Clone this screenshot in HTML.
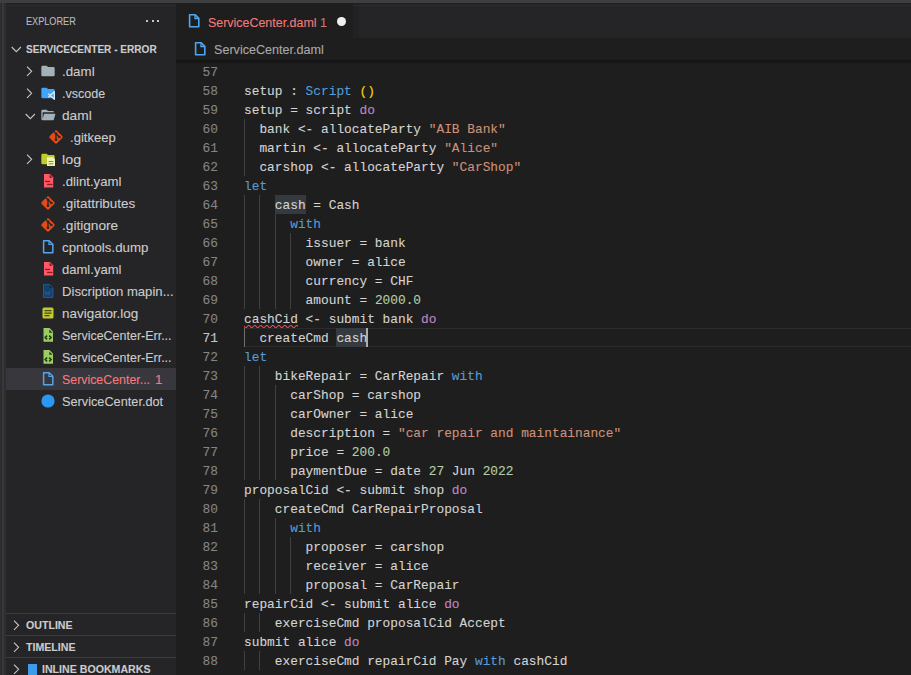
<!DOCTYPE html>
<html><head><meta charset="utf-8">
<style>
*{margin:0;padding:0;box-sizing:border-box}
html,body{width:911px;height:675px;overflow:hidden;background:#1e1e1e}
body{position:relative;font-family:"Liberation Sans",sans-serif;-webkit-text-stroke:0.1px}
.abs{position:absolute}
#topstrip{left:0;top:0;width:911px;height:3px;background:#3e3e40}
#topline{left:6px;top:3px;width:905px;height:1px;background:#202022}
#topline2{left:6px;top:5px;width:905px;height:1px;background:#2b2b2d}
#act{left:0;top:3px;width:6px;height:672px;background:linear-gradient(90deg,#2f2f31 0,#2f2f31 1.5px,#2a2a2c 1.5px,#2a2a2c 2.5px,#38383a 2.5px,#38383a 4px,#2d2d2f 4px,#2d2d2f 6px)}
#side{left:6px;top:3px;width:170px;height:672px;background:#252527}
#tabbar{left:176px;top:3px;width:735px;height:35px;background:#252527}
#tab{left:176px;top:3px;width:177px;height:35px;background:#1e1e1e}
#crumbs{left:176px;top:38px;width:735px;height:22px;background:#1e1e1e}
#editor{left:176px;top:60px;width:735px;height:615px;background:#1e1e1e;overflow:hidden}
#shadow{left:176px;top:59px;width:735px;height:6px;background:linear-gradient(#1e1e1e 0,#161616 1.5px,#151515 2.5px,#1b1b1b 4px,#1e1e1e 6px)}
.st{font-size:13.2px;transform:scaleX(0.963);transform-origin:0 0;line-height:22px;height:22px;color:#cccccc;white-space:nowrap;padding-top:0.5px}
.sb{font-size:11px;font-weight:bold;line-height:22px;height:22px;color:#cccccc;white-space:nowrap;transform-origin:0 0}
.row{position:absolute;left:6px;width:170px;height:22px}
.row .t{position:absolute;top:4px;font-size:12.6px;color:#cccccc;white-space:nowrap;line-height:14px}
.ln{position:absolute;left:177px;padding-top:1px;width:41px;text-align:right;font-family:"Liberation Mono",monospace;font-size:12.83px;line-height:19px;color:#858585;height:19px}
.cl{position:absolute;left:244px;padding-top:1px;font-family:"Liberation Mono",monospace;font-size:12.83px;line-height:19px;color:#d4d4d4;white-space:pre;height:19px}
.g{position:absolute;width:1px;background:#404040}
.k{color:#569cd6}.p{color:#c586c0}.s{color:#ce9178}.n{color:#b5cea8}.y{color:#ffd700}
.ph{position:absolute;left:6px;width:170px;height:22px;border-top:1px solid #3f3f46}
.ph .t{position:absolute;top:5px;font-size:11px;font-weight:bold;color:#cccccc;white-space:nowrap}
</style></head><body>
<div class="abs" id="side"></div>
<div class="abs" id="tabbar"></div>
<div class="abs" style="left:353px;top:3px;width:6px;height:35px;background:#222224"></div>
<div class="abs" id="crumbs"></div>
<div class="abs" id="editor"></div>
<div class="abs" id="shadow"></div>
<div class="abs" id="topstrip"></div>
<div class="abs" id="act"></div>
<div class="abs" id="topline"></div>
<div class="abs" id="topline2"></div>
<div class="abs" id="tab"></div>

<!-- sidebar header -->
<div class="abs" style="left:26px;top:15px;font-size:11px;color:#bbbbbb;white-space:nowrap;transform:scaleX(0.83);transform-origin:0 0">EXPLORER</div>
<div class="abs" style="left:146px;top:20px;width:2px;height:2px;background:#c5c5c5"></div>
<div class="abs" style="left:152px;top:20px;width:2px;height:2px;background:#c5c5c5"></div>
<div class="abs" style="left:157px;top:20px;width:2px;height:2px;background:#c5c5c5"></div>

<!-- tab -->
<svg class="abs" style="left:186px;top:13px" width="16" height="16" viewBox="0 0 16 16"><path fill="#163a66" d="M9.2 1.6v3.6h3.6z"/><path fill="none" stroke="#4ea6f2" stroke-width="1.6" stroke-linejoin="round" d="M3.6 1.7h5.6l3.6 3.6v8.5H3.6z"/><path fill="none" stroke="#4ea6f2" stroke-width="1.3" d="M9 1.7v3.8h3.8"/></svg>
<div class="abs" style="left:208px;top:4.5px;line-height:35px;font-size:13.2px;color:#f47a7a;white-space:nowrap;transform:scaleX(0.943);transform-origin:0 0">ServiceCenter.daml<span style="color:#c9796c"> 1</span></div>
<div class="abs" style="left:337px;top:16.5px;width:9px;height:9px;border-radius:50%;background:#f0f0f0"></div>
<svg class="abs" style="left:192px;top:41px" width="16" height="16" viewBox="0 0 16 16"><path fill="#163a66" d="M9.2 1.6v3.6h3.6z"/><path fill="none" stroke="#4ea6f2" stroke-width="1.6" stroke-linejoin="round" d="M3.6 1.7h5.6l3.6 3.6v8.5H3.6z"/><path fill="none" stroke="#4ea6f2" stroke-width="1.3" d="M9 1.7v3.8h3.8"/></svg>
<div class="abs" style="left:214px;top:39px;line-height:22px;font-size:12.6px;color:#a9a9a9;white-space:nowrap">ServiceCenter.daml</div>
<!-- code lines -->
<div class="abs" style="left:6px;top:368px;width:170px;height:22px;background:#37373d"></div>
<svg class="abs" style="left:11px;top:46px" width="11" height="7" viewBox="0 0 11 7"><path d="M0.7 1 L5.3 5.6 L9.9 1" stroke="#c5c5c5" stroke-width="1.1" fill="none"/></svg>
<div class="abs sb" style="left:26px;top:38px;transform:scaleX(0.915)">SERVICECENTER - ERROR</div>
<svg class="abs" style="left:26px;top:65.5px" width="7" height="11" viewBox="0 0 7 11"><path d="M1 0.7 L5.6 5.3 L1 9.9" stroke="#c5c5c5" stroke-width="1.1" fill="none"/></svg>
<svg class="abs" style="left:40px;top:63px" width="16" height="16" viewBox="0 0 24 24"><path fill="#a3b1b9" d="M10 4H4c-1.11 0-2 .89-2 2v12a2 2 0 0 0 2 2h16a2 2 0 0 0 2-2V8c0-1.11-.9-2-2-2h-8l-2-2z"/></svg>
<div class="abs st" style="left:62px;top:60px;color:#cccccc;transform:scaleX(1.011)">.daml</div>
<svg class="abs" style="left:26px;top:87.5px" width="7" height="11" viewBox="0 0 7 11"><path d="M1 0.7 L5.6 5.3 L1 9.9" stroke="#c5c5c5" stroke-width="1.1" fill="none"/></svg>
<svg class="abs" style="left:40px;top:85px" width="16" height="16" viewBox="0 0 24 24"><path fill="#42a5f5" d="M10 4H4c-1.11 0-2 .89-2 2v12a2 2 0 0 0 2 2h16a2 2 0 0 0 2-2V8c0-1.11-.9-2-2-2h-8l-2-2z"/><path fill="none" stroke="#d6ecff" stroke-width="1.9" stroke-linejoin="round" d="M12.5 13 L21.5 21.5 V10 L12.5 18.5"/></svg>
<div class="abs st" style="left:62px;top:82px;color:#cccccc;transform:scaleX(0.95)">.vscode</div>
<svg class="abs" style="left:24.5px;top:112.5px" width="11" height="7" viewBox="0 0 11 7"><path d="M0.7 1 L5.3 5.6 L9.9 1" stroke="#c5c5c5" stroke-width="1.1" fill="none"/></svg>
<svg class="abs" style="left:40px;top:107px" width="16" height="16" viewBox="0 0 24 24"><path fill="#a3b1b9" d="M19 20H4a2 2 0 0 1-2-2V6c0-1.11.89-2 2-2h6l2 2h7a2 2 0 0 1 2 2H4v10l2.14-8h17.07l-2.28 8.5c-.23.87-1.01 1.5-1.93 1.5z"/></svg>
<div class="abs st" style="left:62px;top:104px;color:#cccccc;transform:scaleX(1.039)">daml</div>
<svg class="abs" style="left:48px;top:129px" width="16" height="16" viewBox="0 0 24 24"><path fill="#e64a19" d="M2.6 10.59L8.38 4.8l1.69 1.7c-.24.85.15 1.78.93 2.23v5.54c-.6.34-1 .99-1 1.73a2 2 0 0 0 2 2 2 2 0 0 0 2-2c0-.74-.4-1.39-1-1.73V9.41l2.07 2.09c-.07.15-.07.32-.07.5a2 2 0 0 0 2 2 2 2 0 0 0 2-2 2 2 0 0 0-2-2c-.18 0-.35 0-.5.07L13.93 7.5a1.98 1.98 0 0 0-1.15-2.34c-.43-.16-.88-.2-1.28-.09L9.8 3.38l.79-.78c.78-.79 2.04-.79 2.82 0l7.99 7.99c.79.78.79 2.04 0 2.82l-7.99 7.99c-.78.79-2.04.79-2.82 0L2.6 13.41c-.79-.78-.79-2.04 0-2.82z"/></svg>
<div class="abs st" style="left:70px;top:126px;color:#cccccc;transform:scaleX(0.991)">.gitkeep</div>
<svg class="abs" style="left:26px;top:153.5px" width="7" height="11" viewBox="0 0 7 11"><path d="M1 0.7 L5.6 5.3 L1 9.9" stroke="#c5c5c5" stroke-width="1.1" fill="none"/></svg>
<svg class="abs" style="left:40px;top:151px" width="16" height="16" viewBox="0 0 24 24"><path fill="#c0ca33" d="M10 4H4c-1.11 0-2 .89-2 2v12a2 2 0 0 0 2 2h16a2 2 0 0 0 2-2V8c0-1.11-.9-2-2-2h-8l-2-2z"/><path fill="#eef4b0" d="M10.5 9.5h9l3 3v10h-12z"/><rect x="13" y="15" width="7" height="1.5" fill="#8a8a30"/><rect x="13" y="18.5" width="7" height="1.5" fill="#8a8a30"/></svg>
<div class="abs st" style="left:62px;top:148px;color:#cccccc;transform:scaleX(1.085)">log</div>
<svg class="abs" style="left:40px;top:173px" width="16" height="16" viewBox="0 0 16 16"><path fill="#ff5868" d="M4 1h6l3.2 3.2V14.6H4z"/><path fill="#7a1a1a" d="M9.5 1.6v3.2h3.2z"/><rect x="5" y="7.8" width="5" height="1.3" fill="#8b1c1c"/><rect x="7" y="10.8" width="5.5" height="1.3" fill="#8b1c1c"/></svg>
<div class="abs st" style="left:62px;top:170px;color:#cccccc;transform:scaleX(1.002)">.dlint.yaml</div>
<svg class="abs" style="left:40px;top:195px" width="16" height="16" viewBox="0 0 24 24"><path fill="#e64a19" d="M2.6 10.59L8.38 4.8l1.69 1.7c-.24.85.15 1.78.93 2.23v5.54c-.6.34-1 .99-1 1.73a2 2 0 0 0 2 2 2 2 0 0 0 2-2c0-.74-.4-1.39-1-1.73V9.41l2.07 2.09c-.07.15-.07.32-.07.5a2 2 0 0 0 2 2 2 2 0 0 0 2-2 2 2 0 0 0-2-2c-.18 0-.35 0-.5.07L13.93 7.5a1.98 1.98 0 0 0-1.15-2.34c-.43-.16-.88-.2-1.28-.09L9.8 3.38l.79-.78c.78-.79 2.04-.79 2.82 0l7.99 7.99c.79.78.79 2.04 0 2.82l-7.99 7.99c-.78.79-2.04.79-2.82 0L2.6 13.41c-.79-.78-.79-2.04 0-2.82z"/></svg>
<div class="abs st" style="left:62px;top:192px;color:#cccccc;transform:scaleX(1.02)">.gitattributes</div>
<svg class="abs" style="left:40px;top:217px" width="16" height="16" viewBox="0 0 24 24"><path fill="#e64a19" d="M2.6 10.59L8.38 4.8l1.69 1.7c-.24.85.15 1.78.93 2.23v5.54c-.6.34-1 .99-1 1.73a2 2 0 0 0 2 2 2 2 0 0 0 2-2c0-.74-.4-1.39-1-1.73V9.41l2.07 2.09c-.07.15-.07.32-.07.5a2 2 0 0 0 2 2 2 2 0 0 0 2-2 2 2 0 0 0-2-2c-.18 0-.35 0-.5.07L13.93 7.5a1.98 1.98 0 0 0-1.15-2.34c-.43-.16-.88-.2-1.28-.09L9.8 3.38l.79-.78c.78-.79 2.04-.79 2.82 0l7.99 7.99c.79.78.79 2.04 0 2.82l-7.99 7.99c-.78.79-2.04.79-2.82 0L2.6 13.41c-.79-.78-.79-2.04 0-2.82z"/></svg>
<div class="abs st" style="left:62px;top:214px;color:#cccccc;transform:scaleX(1.036)">.gitignore</div>
<svg class="abs" style="left:40px;top:239px" width="16" height="16" viewBox="0 0 16 16"><path fill="#163a66" d="M9.2 1.6v3.6h3.6z"/><path fill="none" stroke="#55a5ee" stroke-width="1.5" stroke-linejoin="round" d="M3.6 1.7h5.6l3.6 3.6v8.5H3.6z"/><path fill="none" stroke="#55a5ee" stroke-width="1.2" d="M9 1.7v3.8h3.8"/></svg>
<div class="abs st" style="left:62px;top:236px;color:#cccccc;transform:scaleX(1.007)">cpntools.dump</div>
<svg class="abs" style="left:40px;top:261px" width="16" height="16" viewBox="0 0 16 16"><path fill="#ff5868" d="M4 1h6l3.2 3.2V14.6H4z"/><path fill="#7a1a1a" d="M9.5 1.6v3.2h3.2z"/><rect x="5" y="7.8" width="5" height="1.3" fill="#8b1c1c"/><rect x="7" y="10.8" width="5.5" height="1.3" fill="#8b1c1c"/></svg>
<div class="abs st" style="left:62px;top:258px;color:#cccccc;transform:scaleX(0.989)">daml.yaml</div>
<svg class="abs" style="left:40px;top:283px" width="16" height="16" viewBox="0 0 16 16"><path fill="#17406f" stroke="#245c9c" stroke-width="0.9" d="M3.5 1.3h6l3.5 3.5V14.4H3.5z"/><path fill="#0c2a50" d="M9.5 2v3h3z"/><path fill="none" stroke="#2a5f9e" stroke-width="0.9" d="M5.2 8l1 3.8 1.3-2.8 1.3 2.8 1-3.8"/></svg>
<div class="abs st" style="left:62px;top:280px;color:#cccccc;transform:scaleX(0.995)">Discription mapin...</div>
<svg class="abs" style="left:40px;top:305px" width="16" height="16" viewBox="0 0 16 16"><rect x="2.5" y="2.5" width="11" height="11" rx="1.5" fill="#c0ca33"/><rect x="4.5" y="5" width="7" height="1.3" fill="#4a4a10"/><rect x="4.5" y="7.5" width="7" height="1.3" fill="#4a4a10"/><rect x="4.5" y="10" width="5" height="1.3" fill="#4a4a10"/></svg>
<div class="abs st" style="left:62px;top:302px;color:#cccccc;transform:scaleX(1.02)">navigator.log</div>
<svg class="abs" style="left:40px;top:327px" width="16" height="16" viewBox="0 0 16 16"><path fill="#9ccc65" d="M3.5 1h6l3.5 3.5V14.7H3.5z"/><path fill="#1f3a08" d="M9.3 2.6 L12.4 5.7 H9.3 Z"/><path fill="none" stroke="#1f3a08" stroke-width="1.5" d="M7.1 8.6L5.2 10.5l1.9 1.9M9.2 8.6l1.9 1.9-1.9 1.9"/></svg>
<div class="abs st" style="left:62px;top:324px;color:#cccccc;transform:scaleX(0.946)">ServiceCenter-Err...</div>
<svg class="abs" style="left:40px;top:349px" width="16" height="16" viewBox="0 0 16 16"><path fill="#9ccc65" d="M3.5 1h6l3.5 3.5V14.7H3.5z"/><path fill="#1f3a08" d="M9.3 2.6 L12.4 5.7 H9.3 Z"/><path fill="none" stroke="#1f3a08" stroke-width="1.5" d="M7.1 8.6L5.2 10.5l1.9 1.9M9.2 8.6l1.9 1.9-1.9 1.9"/></svg>
<div class="abs st" style="left:62px;top:346px;color:#cccccc;transform:scaleX(0.946)">ServiceCenter-Err...</div>
<svg class="abs" style="left:40px;top:371px" width="16" height="16" viewBox="0 0 16 16"><path fill="#163a66" d="M9.2 1.6v3.6h3.6z"/><path fill="none" stroke="#55a5ee" stroke-width="1.5" stroke-linejoin="round" d="M3.6 1.7h5.6l3.6 3.6v8.5H3.6z"/><path fill="none" stroke="#55a5ee" stroke-width="1.2" d="M9 1.7v3.8h3.8"/></svg>
<div class="abs st" style="left:62px;top:368px;color:#f47a7a;transform:scaleX(0.938)">ServiceCenter...</div>
<div class="abs st" style="left:155px;top:368px;color:#f47a7a;transform:none">1</div>
<svg class="abs" style="left:40px;top:393px" width="16" height="16" viewBox="0 0 16 16"><circle cx="8" cy="8" r="6.6" fill="#2a98f2"/></svg>
<div class="abs st" style="left:62px;top:390px;color:#cccccc;transform:scaleX(0.965)">ServiceCenter.dot</div>
<div class="abs" style="left:6px;top:613px;width:170px;height:1px;background:#3c3c3f"></div>
<svg class="abs" style="left:13px;top:620px" width="7" height="11" viewBox="0 0 7 11"><path d="M1 0.7 L5.6 5.3 L1 9.9" stroke="#c5c5c5" stroke-width="1.1" fill="none"/></svg>
<div class="abs sb" style="left:26px;top:614px;transform:scaleX(0.965)">OUTLINE</div>
<div class="abs" style="left:6px;top:635px;width:170px;height:1px;background:#3c3c3f"></div>
<svg class="abs" style="left:13px;top:642px" width="7" height="11" viewBox="0 0 7 11"><path d="M1 0.7 L5.6 5.3 L1 9.9" stroke="#c5c5c5" stroke-width="1.1" fill="none"/></svg>
<div class="abs sb" style="left:26px;top:636px;transform:scaleX(0.965)">TIMELINE</div>
<div class="abs" style="left:6px;top:657px;width:170px;height:1px;background:#3c3c3f"></div>
<svg class="abs" style="left:13px;top:664px" width="7" height="11" viewBox="0 0 7 11"><path d="M1 0.7 L5.6 5.3 L1 9.9" stroke="#c5c5c5" stroke-width="1.1" fill="none"/></svg>
<svg class="abs" style="left:27px;top:663px" width="11" height="14" viewBox="0 0 11 14"><path fill="#3d9be9" d="M1 1h9v11H1z"/><path fill="#e3f2fd" d="M1.5 12h8.5v2H1.5z"/></svg>
<div class="abs sb" style="left:42px;top:658px;transform:scaleX(0.965)">INLINE BOOKMARKS</div>
<div class="abs" style="left:244px;top:328px;width:667px;height:19px;border-top:1px solid #2b2b2b;border-bottom:1px solid #2b2b2b"></div>
<div class="ln" style="top:62px;">57</div>
<div class="ln" style="top:81px;">58</div>
<div class="ln" style="top:100px;">59</div>
<div class="ln" style="top:119px;">60</div>
<div class="ln" style="top:138px;">61</div>
<div class="ln" style="top:157px;">62</div>
<div class="ln" style="top:176px;">63</div>
<div class="ln" style="top:195px;">64</div>
<div class="abs" style="left:274.80px;top:195px;width:30.80px;height:19px;background:#343a40"></div>
<div class="ln" style="top:214px;">65</div>
<div class="ln" style="top:233px;">66</div>
<div class="ln" style="top:252px;">67</div>
<div class="ln" style="top:271px;">68</div>
<div class="ln" style="top:290px;">69</div>
<div class="ln" style="top:309px;">70</div>
<div class="ln" style="top:328px;color:#c6c6c6">71</div>
<div class="abs" style="left:336.40px;top:328px;width:30.80px;height:19px;background:#343a40"></div>
<div class="ln" style="top:347px;">72</div>
<div class="ln" style="top:366px;">73</div>
<div class="ln" style="top:385px;">74</div>
<div class="ln" style="top:404px;">75</div>
<div class="ln" style="top:423px;">76</div>
<div class="ln" style="top:442px;">77</div>
<div class="ln" style="top:461px;">78</div>
<div class="ln" style="top:480px;">79</div>
<div class="ln" style="top:499px;">80</div>
<div class="ln" style="top:518px;">81</div>
<div class="ln" style="top:537px;">82</div>
<div class="ln" style="top:556px;">83</div>
<div class="ln" style="top:575px;">84</div>
<div class="ln" style="top:594px;">85</div>
<div class="ln" style="top:613px;">86</div>
<div class="ln" style="top:632px;">87</div>
<div class="ln" style="top:651px;">88</div>
<div class="g" style="left:244.0px;top:119px;height:19px;background:#404040"></div>
<div class="g" style="left:244.0px;top:138px;height:19px;background:#404040"></div>
<div class="g" style="left:244.0px;top:157px;height:19px;background:#404040"></div>
<div class="g" style="left:244.0px;top:195px;height:19px;background:#404040"></div>
<div class="g" style="left:259.4px;top:195px;height:19px;background:#404040"></div>
<div class="g" style="left:244.0px;top:214px;height:19px;background:#404040"></div>
<div class="g" style="left:259.4px;top:214px;height:19px;background:#404040"></div>
<div class="g" style="left:274.8px;top:214px;height:19px;background:#404040"></div>
<div class="g" style="left:244.0px;top:233px;height:19px;background:#404040"></div>
<div class="g" style="left:259.4px;top:233px;height:19px;background:#404040"></div>
<div class="g" style="left:274.8px;top:233px;height:19px;background:#404040"></div>
<div class="g" style="left:290.2px;top:233px;height:19px;background:#404040"></div>
<div class="g" style="left:244.0px;top:252px;height:19px;background:#404040"></div>
<div class="g" style="left:259.4px;top:252px;height:19px;background:#404040"></div>
<div class="g" style="left:274.8px;top:252px;height:19px;background:#404040"></div>
<div class="g" style="left:290.2px;top:252px;height:19px;background:#404040"></div>
<div class="g" style="left:244.0px;top:271px;height:19px;background:#404040"></div>
<div class="g" style="left:259.4px;top:271px;height:19px;background:#404040"></div>
<div class="g" style="left:274.8px;top:271px;height:19px;background:#404040"></div>
<div class="g" style="left:290.2px;top:271px;height:19px;background:#404040"></div>
<div class="g" style="left:244.0px;top:290px;height:19px;background:#404040"></div>
<div class="g" style="left:259.4px;top:290px;height:19px;background:#404040"></div>
<div class="g" style="left:274.8px;top:290px;height:19px;background:#404040"></div>
<div class="g" style="left:290.2px;top:290px;height:19px;background:#404040"></div>
<div class="g" style="left:244.0px;top:328px;height:19px;background:#707070"></div>
<div class="g" style="left:244.0px;top:366px;height:19px;background:#404040"></div>
<div class="g" style="left:259.4px;top:366px;height:19px;background:#404040"></div>
<div class="g" style="left:244.0px;top:385px;height:19px;background:#404040"></div>
<div class="g" style="left:259.4px;top:385px;height:19px;background:#404040"></div>
<div class="g" style="left:274.8px;top:385px;height:19px;background:#404040"></div>
<div class="g" style="left:244.0px;top:404px;height:19px;background:#404040"></div>
<div class="g" style="left:259.4px;top:404px;height:19px;background:#404040"></div>
<div class="g" style="left:274.8px;top:404px;height:19px;background:#404040"></div>
<div class="g" style="left:244.0px;top:423px;height:19px;background:#404040"></div>
<div class="g" style="left:259.4px;top:423px;height:19px;background:#404040"></div>
<div class="g" style="left:274.8px;top:423px;height:19px;background:#404040"></div>
<div class="g" style="left:244.0px;top:442px;height:19px;background:#404040"></div>
<div class="g" style="left:259.4px;top:442px;height:19px;background:#404040"></div>
<div class="g" style="left:274.8px;top:442px;height:19px;background:#404040"></div>
<div class="g" style="left:244.0px;top:461px;height:19px;background:#404040"></div>
<div class="g" style="left:259.4px;top:461px;height:19px;background:#404040"></div>
<div class="g" style="left:274.8px;top:461px;height:19px;background:#404040"></div>
<div class="g" style="left:244.0px;top:499px;height:19px;background:#404040"></div>
<div class="g" style="left:259.4px;top:499px;height:19px;background:#404040"></div>
<div class="g" style="left:244.0px;top:518px;height:19px;background:#404040"></div>
<div class="g" style="left:259.4px;top:518px;height:19px;background:#404040"></div>
<div class="g" style="left:274.8px;top:518px;height:19px;background:#404040"></div>
<div class="g" style="left:244.0px;top:537px;height:19px;background:#404040"></div>
<div class="g" style="left:259.4px;top:537px;height:19px;background:#404040"></div>
<div class="g" style="left:274.8px;top:537px;height:19px;background:#404040"></div>
<div class="g" style="left:290.2px;top:537px;height:19px;background:#404040"></div>
<div class="g" style="left:244.0px;top:556px;height:19px;background:#404040"></div>
<div class="g" style="left:259.4px;top:556px;height:19px;background:#404040"></div>
<div class="g" style="left:274.8px;top:556px;height:19px;background:#404040"></div>
<div class="g" style="left:290.2px;top:556px;height:19px;background:#404040"></div>
<div class="g" style="left:244.0px;top:575px;height:19px;background:#404040"></div>
<div class="g" style="left:259.4px;top:575px;height:19px;background:#404040"></div>
<div class="g" style="left:274.8px;top:575px;height:19px;background:#404040"></div>
<div class="g" style="left:290.2px;top:575px;height:19px;background:#404040"></div>
<div class="g" style="left:244.0px;top:613px;height:19px;background:#404040"></div>
<div class="g" style="left:259.4px;top:613px;height:19px;background:#404040"></div>
<div class="g" style="left:244.0px;top:651px;height:19px;background:#404040"></div>
<div class="g" style="left:259.4px;top:651px;height:19px;background:#404040"></div>
<div class="cl" style="top:62px"></div>
<div class="cl" style="top:81px">setup : <span class="k">Script</span> <span class="y">()</span></div>
<div class="cl" style="top:100px">setup = script <span class="p">do</span></div>
<div class="cl" style="top:119px">  bank &lt;- allocateParty <span class="s">&quot;AIB Bank&quot;</span></div>
<div class="cl" style="top:138px">  martin &lt;- allocateParty <span class="s">&quot;Alice&quot;</span></div>
<div class="cl" style="top:157px">  carshop &lt;- allocateParty <span class="s">&quot;CarShop&quot;</span></div>
<div class="cl" style="top:176px"><span class="k">let</span></div>
<div class="cl" style="top:195px">    cash = Cash</div>
<div class="cl" style="top:214px">      <span class="k">with</span></div>
<div class="cl" style="top:233px">        issuer = bank</div>
<div class="cl" style="top:252px">        owner = alice</div>
<div class="cl" style="top:271px">        currency = CHF</div>
<div class="cl" style="top:290px">        amount = <span class="n">2000.0</span></div>
<div class="cl" style="top:309px">cashCid &lt;- submit bank <span class="p">do</span></div>
<div class="cl" style="top:328px">  createCmd cash</div>
<div class="cl" style="top:347px"><span class="k">let</span></div>
<div class="cl" style="top:366px">    bikeRepair = CarRepair <span class="k">with</span></div>
<div class="cl" style="top:385px">      carShop = carshop</div>
<div class="cl" style="top:404px">      carOwner = alice</div>
<div class="cl" style="top:423px">      description = <span class="s">&quot;car repair and maintainance&quot;</span></div>
<div class="cl" style="top:442px">      price = <span class="n">200.0</span></div>
<div class="cl" style="top:461px">      paymentDue = date <span class="n">27</span> Jun <span class="n">2022</span></div>
<div class="cl" style="top:480px">proposalCid &lt;- submit shop <span class="p">do</span></div>
<div class="cl" style="top:499px">    createCmd CarRepairProposal</div>
<div class="cl" style="top:518px">      <span class="k">with</span></div>
<div class="cl" style="top:537px">        proposer = carshop</div>
<div class="cl" style="top:556px">        receiver = alice</div>
<div class="cl" style="top:575px">        proposal = CarRepair</div>
<div class="cl" style="top:594px">repairCid &lt;- submit alice <span class="p">do</span></div>
<div class="cl" style="top:613px">    exerciseCmd proposalCid Accept</div>
<div class="cl" style="top:632px">submit alice <span class="p">do</span></div>
<div class="cl" style="top:651px">    exerciseCmd repairCid Pay <span class="k">with</span> cashCid</div>
<div class="abs" style="left:366.2px;top:328px;width:2px;height:19px;background:#aeafad"></div>
<svg class="abs" style="left:244px;top:325px" width="54" height="3"><g fill="#f14c4c"><g transform="translate(0 0)"><polygon points="5.5,0 2.5,3 1.1,3 4.1,0"/><polygon points="4,0 6,2 6,0.6 5.4,0"/><polygon points="0,2 1,3 2.4,3 0,0.6"/></g><g transform="translate(6 0)"><polygon points="5.5,0 2.5,3 1.1,3 4.1,0"/><polygon points="4,0 6,2 6,0.6 5.4,0"/><polygon points="0,2 1,3 2.4,3 0,0.6"/></g><g transform="translate(12 0)"><polygon points="5.5,0 2.5,3 1.1,3 4.1,0"/><polygon points="4,0 6,2 6,0.6 5.4,0"/><polygon points="0,2 1,3 2.4,3 0,0.6"/></g><g transform="translate(18 0)"><polygon points="5.5,0 2.5,3 1.1,3 4.1,0"/><polygon points="4,0 6,2 6,0.6 5.4,0"/><polygon points="0,2 1,3 2.4,3 0,0.6"/></g><g transform="translate(24 0)"><polygon points="5.5,0 2.5,3 1.1,3 4.1,0"/><polygon points="4,0 6,2 6,0.6 5.4,0"/><polygon points="0,2 1,3 2.4,3 0,0.6"/></g><g transform="translate(30 0)"><polygon points="5.5,0 2.5,3 1.1,3 4.1,0"/><polygon points="4,0 6,2 6,0.6 5.4,0"/><polygon points="0,2 1,3 2.4,3 0,0.6"/></g><g transform="translate(36 0)"><polygon points="5.5,0 2.5,3 1.1,3 4.1,0"/><polygon points="4,0 6,2 6,0.6 5.4,0"/><polygon points="0,2 1,3 2.4,3 0,0.6"/></g><g transform="translate(42 0)"><polygon points="5.5,0 2.5,3 1.1,3 4.1,0"/><polygon points="4,0 6,2 6,0.6 5.4,0"/><polygon points="0,2 1,3 2.4,3 0,0.6"/></g><g transform="translate(48 0)"><polygon points="5.5,0 2.5,3 1.1,3 4.1,0"/><polygon points="4,0 6,2 6,0.6 5.4,0"/><polygon points="0,2 1,3 2.4,3 0,0.6"/></g></g></svg>
</body></html>
